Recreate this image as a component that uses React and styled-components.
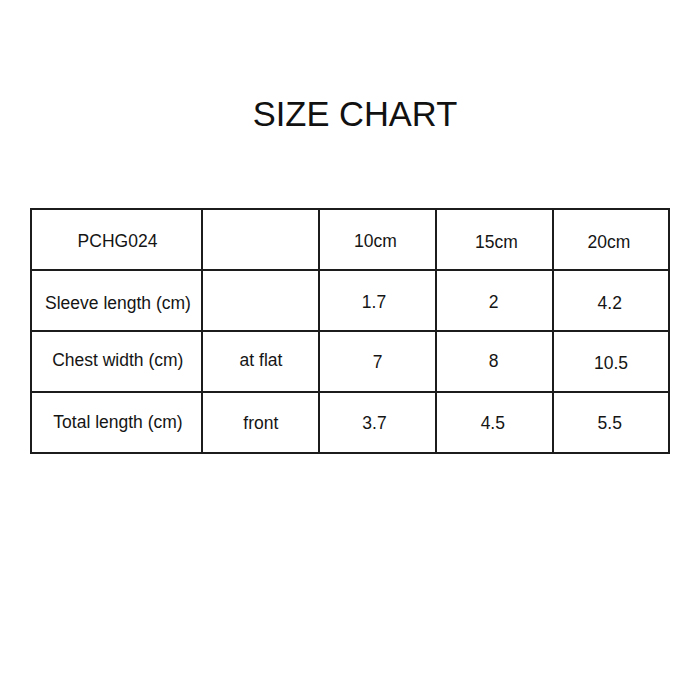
import React from 'react';
import styled, { createGlobalStyle } from 'styled-components';

const GlobalStyle = createGlobalStyle`
  html, body {
    margin: 0;
    padding: 0;
    background: #fff;
  }
  body {
    font-family: 'Liberation Sans', Arial, sans-serif;
    color: #141414;
  }
`;

const Page = styled.div`
  width: 700px;
  height: 700px;
  padding-top: 97px;
  box-sizing: border-box;
  display: flex;
  flex-direction: column;
  align-items: center;
`;

const Title = styled.h1`
  margin: 0 0 76px 10px;
  font-size: 34.5px;
  font-weight: 400;
  line-height: 1;
  color: #111;
`;

const ChartGrid = styled.div`
  display: grid;
  grid-template-columns: 169px 115px 115px 115px 114px;
  grid-auto-rows: 59px;
  gap: 2px;
  padding: 2px;
  background: #1c1c1c;
  width: 640px;
  box-sizing: border-box;
`;

const Cell = styled.div`
  background: #fff;
  display: flex;
  align-items: center;
  justify-content: center;
  font-size: 17.5px;
  color: #151515;
  box-sizing: border-box;
  padding-top: ${(p) => Math.max(0, (p.$dy || 0) * 2)}px;
  padding-bottom: ${(p) => Math.max(0, -(p.$dy || 0) * 2)}px;
  padding-left: ${(p) => Math.max(0, (p.$dx || 0) * 2)}px;
  padding-right: ${(p) => Math.max(0, -(p.$dx || 0) * 2)}px;
`;

// [text, dx, dy] — small nudges so the text sits where the chart has it
const rows = [
  [['PCHG024', 1, 2.5], ['', 0, 0], ['10cm', -2, 2.5], ['15cm', 2, 3], ['20cm', -2, 3]],
  [['Sleeve length (cm)', 1.5, 3], ['', 0, 0], ['1.7', -3.5, 2], ['2', -1, 2], ['4.2', -1.3, 3.5]],
  [['Chest width (cm)', 1.3, -1], ['at flat', 0.5, -1], ['7', 0, 1], ['8', -1, 0], ['10.5', 0, 2]],
  [['Total length (cm)', 1.5, 0], ['front', 0.3, 1], ['3.7', -3, 1], ['4.5', -1.7, 1], ['5.5', -1.3, 1]],
];

function App() {
  return (
    <>
      <GlobalStyle />
      <Page>
        <Title>SIZE CHART</Title>
        <ChartGrid>
          {rows.map((row, r) =>
            row.map(([text, dx, dy], c) => (
              <Cell key={`${r}-${c}`} $dx={dx} $dy={dy}>
                {text}
              </Cell>
            ))
          )}
        </ChartGrid>
      </Page>
    </>
  );
}

export default App;
